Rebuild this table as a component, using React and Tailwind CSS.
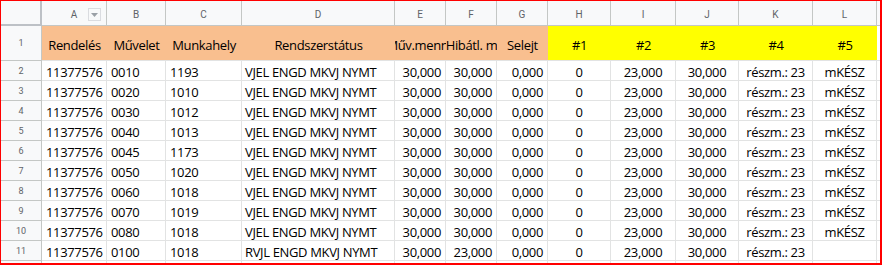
import React from "react";

const W = [
  "w-[65px]",
  "w-[59px]",
  "w-[76px]",
  "w-[153px]",
  "w-[51px]",
  "w-[51px]",
  "w-[51px]",
  "w-[63px]",
  "w-[65px]",
  "w-[63px]",
  "w-[74px]",
  "w-[64px]",
];
const LETTERS = ["A", "B", "C", "D", "E", "F", "G", "H", "I", "J", "K", "L"];
const HEAD = [
  "Rendelés",
  "Művelet",
  "Munkahely",
  "Rendszerstátus",
  "Műv.menny",
  "Hibátl. m",
  "Selejt",
  "#1",
  "#2",
  "#3",
  "#4",
  "#5",
];
const ALIGN = [
  "justify-start pl-1",
  "justify-start pl-1",
  "justify-start pl-1",
  "justify-start pl-[3px]",
  "justify-end pr-1",
  "justify-end pr-1",
  "justify-end pr-1",
  "justify-center",
  "justify-center",
  "justify-center",
  "justify-center",
  "justify-center",
];

const codes = [
  ["0010", "1193"],
  ["0020", "1010"],
  ["0030", "1012"],
  ["0040", "1013"],
  ["0045", "1173"],
  ["0050", "1020"],
  ["0060", "1018"],
  ["0070", "1019"],
  ["0080", "1018"],
  ["0100", "1018"],
];
const ROWS = codes.map(([op, wc], i) => {
  const last = i === codes.length - 1;
  return [
    "11377576",
    op,
    wc,
    last ? "RVJL ENGD MKVJ NYMT" : "VJEL ENGD MKVJ NYMT",
    "30,000",
    last ? "23,000" : "30,000",
    "0,000",
    "0",
    "23,000",
    "30,000",
    "részm.: 23",
    last ? "" : "mKÉSZ",
  ];
});

const rowHead =
  "w-[41px] shrink-0 bg-[#f8f9fa] border-r border-b border-[#c4c7c5] flex items-center justify-center text-[9px] tracking-normal text-[#5f6368] font-['Roboto',sans-serif]";

function FilterIcon() {
  return (
    <div className="absolute right-[5px] top-[7px] w-[13px] h-[13px] border border-[#dadce0] bg-[#f8f9fa] flex items-center justify-center">
      <svg width="7" height="4" viewBox="0 0 7 4">
        <path d="M0 0 L7 0 L3.5 4 Z" fill="#9aa0a6" />
      </svg>
    </div>
  );
}

export default function App() {
  return (
    <div className="w-[884px] h-[266px] bg-white overflow-hidden">
      <div className="w-[882px] h-[265px] border-t border-l border-r-2 border-b-2 border-[#ff0000] overflow-hidden flex flex-col text-black font-['Open_Sans',sans-serif] text-[13px] tracking-[-0.35px] leading-4">
        {/* column letters */}
        <div className="flex h-[25px] shrink-0">
          <div className="w-[41px] shrink-0 bg-[#f8f9fa] border-r-2 border-b-2 border-[#bdc1c6]" />
          {LETTERS.map((l, i) => (
            <div
              key={l}
              className={`${W[i]} shrink-0 relative bg-[#f8f9fa] border-r border-b border-[#c4c7c5] flex items-center justify-center pt-[3px] text-[10px] tracking-normal text-[#5f6368] font-['Roboto',sans-serif]`}
            >
              {l}
              {i === 0 && <FilterIcon />}
            </div>
          ))}
          <div className="flex-1 bg-[#f8f9fa] border-b border-[#c4c7c5]" />
        </div>
        {/* header row */}
        <div className="flex h-[35px] shrink-0">
          <div className={rowHead}>1</div>
          {HEAD.map((h, i) => (
            <div
              key={h}
              className={`${W[i]} shrink-0 overflow-hidden whitespace-nowrap flex items-center justify-center pt-[3px] border-b border-[#e2e3e3] ${
                i < 7 ? "bg-[#f9bf8f]" : "bg-[#ffff00]"
              }`}
            >
              <span className="shrink-0">{h}</span>
            </div>
          ))}
          <div className="flex-1 border-b border-[#e2e3e3]" />
        </div>
        {/* data rows */}
        {ROWS.map((r, ri) => (
          <div key={ri} className="flex h-5 shrink-0">
            <div className={rowHead}>{ri + 2}</div>
            {r.map((v, ci) => (
              <div
                key={ci}
                className={`${W[ci]} shrink-0 overflow-hidden whitespace-nowrap flex items-end border-r border-b border-[#e2e3e3] ${ALIGN[ci]}`}
              >
                <span className="shrink-0">{v}</span>
              </div>
            ))}
            <div className="flex-1 border-b border-[#e2e3e3]" />
          </div>
        ))}
        {/* partial row 12 */}
        <div className="flex flex-1">
          <div className="w-[41px] shrink-0 bg-[#f8f9fa] border-r border-[#c4c7c5]" />
          {W.map((w, i) => (
            <div key={i} className={`${w} shrink-0 border-r border-[#e2e3e3]`} />
          ))}
          <div className="flex-1" />
        </div>
      </div>
    </div>
  );
}
